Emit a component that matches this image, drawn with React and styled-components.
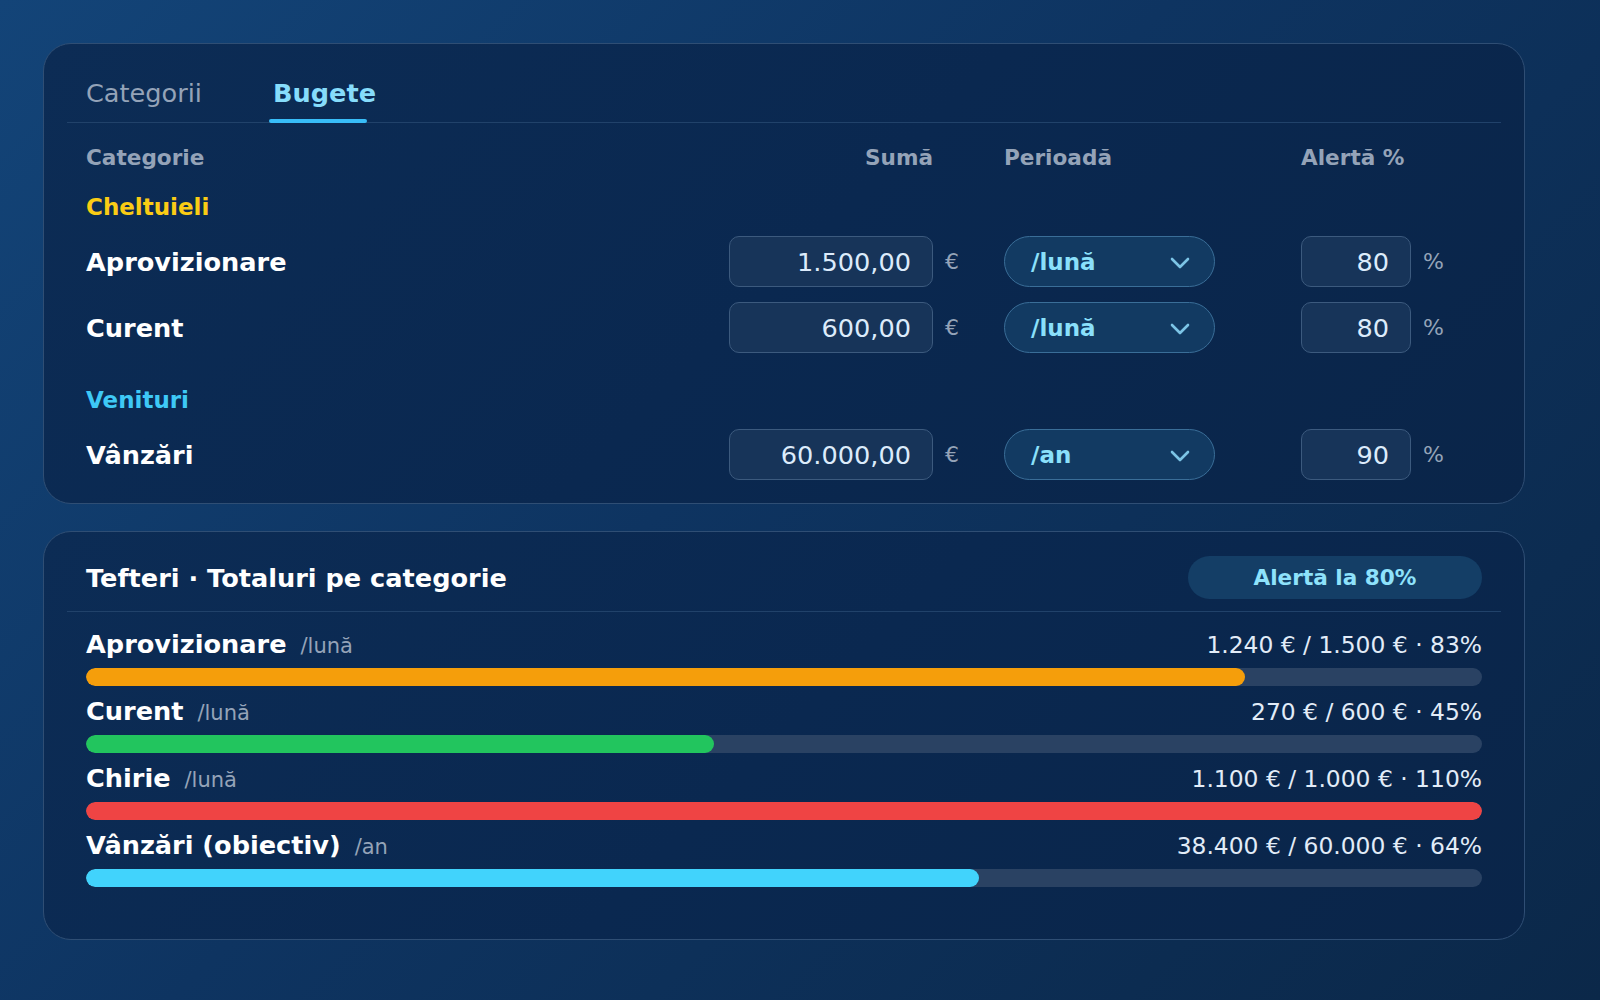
import React from "react";
import styled, { createGlobalStyle } from "styled-components";

const GlobalStyle = createGlobalStyle`
	* { box-sizing: border-box; }
	html, body {
		margin: 0;
		min-height: 100%;
	}
	body {
		font-family: "DejaVu Sans", "Noto Sans", sans-serif;
		background: linear-gradient(135deg, #134478 0%, #0e3461 45%, #0b2849 100%);
		min-height: 100vh;
		color: #ffffff;
	}
`;

const budgets = [
	{
		group: "Cheltuieli",
		tone: "#facc15",
		rows: [
			{ name: "Aprovizionare", amount: "1.500,00", period: "/lună", alert: "80" },
			{ name: "Curent", amount: "600,00", period: "/lună", alert: "80" },
		],
	},
	{
		group: "Venituri",
		tone: "#3ec9f6",
		rows: [{ name: "Vânzări", amount: "60.000,00", period: "/an", alert: "90" }],
	},
];

const totals = [
	{ name: "Aprovizionare", period: "/lună", value: "1.240 € / 1.500 € · 83%", pct: 83, color: "#f59e0b" },
	{ name: "Curent", period: "/lună", value: "270 € / 600 € · 45%", pct: 45, color: "#22c55e" },
	{ name: "Chirie", period: "/lună", value: "1.100 € / 1.000 € · 110%", pct: 100, color: "#ef4444" },
	{ name: "Vânzări (obiectiv)", period: "/an", value: "38.400 € / 60.000 € · 64%", pct: 64, color: "#41d3fc" },
];

const Chevron = () => (
	<svg width="20" height="12" viewBox="0 0 20 12" fill="none">
		<path d="M2 2 L10 10 L18 2" stroke="#7cc4e6" strokeWidth="2.6" strokeLinecap="round" strokeLinejoin="round" />
	</svg>
);

export default function App() {
	return (
		<Page>
			<GlobalStyle />
			<Card>
				<TabBar>
					<Tab>Categorii</Tab>
					<Tab $active>Bugete</Tab>
				</TabBar>
				<Body>
					<Grid>
						<HeadCell>Categorie</HeadCell>
						<HeadCell $right>Sumă</HeadCell>
						<span />
						<HeadCell>Perioadă</HeadCell>
						<span />
						<HeadCell $wide>Alertă %</HeadCell>
					</Grid>
					<Groups>
						{budgets.map((g) => (
							<Group key={g.group}>
								<GroupLabel $tone={g.tone}>{g.group}</GroupLabel>
								{g.rows.map((r) => (
									<Grid key={r.name}>
										<RowName>{r.name}</RowName>
										<Field>{r.amount}</Field>
										<Unit>€</Unit>
										<Select>
											<span>{r.period}</span>
											<Chevron />
										</Select>
										<span />
										<Field>{r.alert}</Field>
										<Unit>%</Unit>
									</Grid>
								))}
							</Group>
						))}
					</Groups>
				</Body>
			</Card>

			<Card>
				<TotalsHead>
					<Title>Tefteri · Totaluri pe categorie</Title>
					<Pill>Alertă la 80%</Pill>
				</TotalsHead>
				<TotalsList>
					{totals.map((t) => (
						<Item key={t.name}>
							<ItemLine>
								<ItemName>
									{t.name}
									<Period>{t.period}</Period>
								</ItemName>
								<ItemValue>{t.value}</ItemValue>
							</ItemLine>
							<Track>
								<Fill style={{ width: `${t.pct}%` }} $color={t.color} />
							</Track>
						</Item>
					))}
				</TotalsList>
			</Card>
		</Page>
	);
}

const Page = styled.div`
	padding: 43px 0 0 43px;
	display: flex;
	flex-direction: column;
	gap: 27px;
`;

const Card = styled.section`
	width: 1482px;
	border: 1px solid #2f4e74;
	border-radius: 28px;
	padding: 23px;
	background: linear-gradient(135deg, #0c2c55 0%, #0a2850 50%, #0a2549 100%);
`;

const TabBar = styled.div`
	display: flex;
	gap: 71px;
	padding: 11px 19px 14px;
	border-bottom: 1px solid #21426a;
`;

const Tab = styled.div`
	position: relative;
	font-size: 25.6px;
	line-height: 30px;
	font-weight: ${(p) => (p.$active ? 700 : 400)};
	color: ${(p) => (p.$active ? "#86dcfb" : "#94a3b8")};

	&::after {
		content: "";
		display: ${(p) => (p.$active ? "block" : "none")};
		position: absolute;
		left: -4px;
		width: 98px;
		bottom: -15px;
		height: 4px;
		border-radius: 2px;
		background: #38bdf8;
	}
`;

const Body = styled.div`
	padding: 22px 19px 0;
	display: flex;
	flex-direction: column;
	gap: 24px;
`;

const Grid = styled.div`
	display: grid;
	grid-template-columns: 1fr 204px 71px 211px 86px 110px 71px;
	align-items: center;
`;

const HeadCell = styled.div`
	font-size: 21.6px;
	line-height: 25px;
	font-weight: 700;
	color: #94a3b8;
	text-align: ${(p) => (p.$right ? "right" : "left")};
	white-space: nowrap;
	grid-column: ${(p) => (p.$wide ? "span 2" : "auto")};
`;

const Groups = styled.div`
	display: flex;
	flex-direction: column;
	gap: 34px;
`;

const Group = styled.div`
	display: flex;
	flex-direction: column;
	gap: 15px;
`;

const GroupLabel = styled.div`
	font-size: 23px;
	line-height: 27px;
	font-weight: 700;
	color: ${(p) => p.$tone};
`;

const RowName = styled.div`
	font-size: 25.6px;
	font-weight: 700;
	color: #ffffff;
`;

const Field = styled.div`
	height: 51px;
	border: 1.5px solid #3c5a7e;
	border-radius: 10px;
	background: #173459;
	display: flex;
	align-items: center;
	justify-content: flex-end;
	padding-right: 21px;
	font-size: 25.6px;
	color: #dcebfb;
`;

const Unit = styled.div`
	padding-left: 12px;
	font-size: 22px;
	color: #94a3b8;
`;

const Select = styled.div`
	height: 51px;
	border: 1.5px solid #3a6e98;
	border-radius: 26px;
	background: #123a62;
	display: flex;
	align-items: center;
	justify-content: space-between;
	padding: 0 24px 0 26px;
	font-size: 23px;
	font-weight: 700;
	color: #8ae0fb;

	svg {
		margin-top: 2px;
	}
`;

const TotalsHead = styled.div`
	display: flex;
	align-items: center;
	justify-content: space-between;
	padding: 1px 19px 12px;
	border-bottom: 1px solid #21426a;
`;

const Title = styled.div`
	font-size: 25.6px;
	font-weight: 700;
	color: #ffffff;
`;

const Pill = styled.div`
	width: 294px;
	height: 43px;
	border-radius: 22px;
	background: #143e66;
	display: flex;
	align-items: center;
	justify-content: center;
	font-size: 21.6px;
	font-weight: 700;
	color: #8ee2fb;
`;

const TotalsList = styled.div`
	padding: 17px 19px 29px;
	display: flex;
	flex-direction: column;
	gap: 10px;
`;

const Item = styled.div`
	display: flex;
	flex-direction: column;
	gap: 9px;
`;

const ItemLine = styled.div`
	display: flex;
	align-items: baseline;
	justify-content: space-between;
	height: 30px;
`;

const ItemName = styled.div`
	font-size: 25.6px;
	line-height: 30px;
	font-weight: 700;
	color: #ffffff;
`;

const Period = styled.span`
	margin-left: 14px;
	font-size: 21px;
	font-weight: 400;
	color: #94a3b8;
`;

const ItemValue = styled.div`
	font-size: 23.4px;
	color: #e2ecf8;
`;

const Track = styled.div`
	height: 18px;
	border-radius: 9px;
	background: #2a4263;
	overflow: hidden;
`;

const Fill = styled.div`
	height: 100%;
	border-radius: 9px;
	background: ${(p) => p.$color};
`;
